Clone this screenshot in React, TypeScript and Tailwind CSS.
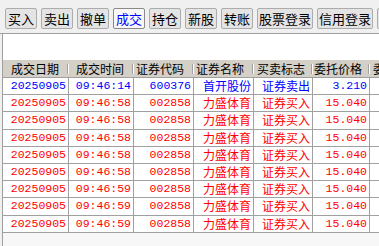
import React from 'react'

const buttons = [
  { label: '买入', w: 'w-[32px]' },
  { label: '卖出', w: 'w-[32px]' },
  { label: '撤单', w: 'w-[32px]' },
  { label: '成交', w: 'w-[32px]', active: true },
  { label: '持仓', w: 'w-[32px]' },
  { label: '新股', w: 'w-[32px]' },
  { label: '转账', w: 'w-[32px]' },
  { label: '股票登录', w: 'w-[56px]' },
  { label: '信用登录', w: 'w-[56px]' },
  { label: '查询', w: 'w-[32px]' },
]

// column widths include the right grid line
const cols = [
  { title: '成交日期', w: 'w-[66px]', pl: 'pl-[8px]' },
  { title: '成交时间', w: 'w-[65px]', pl: 'pl-[7px]' },
  { title: '证券代码', w: 'w-[60px]', pl: 'pl-[2px]' },
  { title: '证券名称', w: 'w-[60px]', pl: 'pl-[2px]' },
  { title: '买卖标志', w: 'w-[59px]', pl: 'pl-[3px]' },
  { title: '委托价格', w: 'w-[57px]', pl: 'pl-[1px]' },
  { title: '委托数量', w: 'w-[60px]', pl: 'pl-[3px]' },
]

type Row = { date: string; time: string; code: string; name: string; side: string; price: string; sell?: boolean }

const rows: Row[] = [
  { date: '20250905', time: '09:46:14', code: '600376', name: '首开股份', side: '证券卖出', price: '3.210', sell: true },
  ...['58', '58', '58', '58', '58', '59', '59', '59'].map((s) => ({
    date: '20250905',
    time: '09:46:' + s,
    code: '002858',
    name: '力盛体育',
    side: '证券买入',
    price: '15.040',
  })),
]

const num = "font-['Liberation_Mono','Noto_Sans_CJK_SC',monospace] text-[11.5px]"
const cjk = "font-['Noto_Sans_CJK_SC',sans-serif] text-[12px]"

export default function App() {
  return (
    <div className="w-[379px] h-[246px] overflow-hidden bg-[#f0f0f0] flex flex-col">
      {/* toolbar */}
      <div className="h-[34px] shrink-0 flex items-start gap-[4px] pl-[5px] pt-[8px] border-b border-[#a0a0a0] overflow-hidden">
        {buttons.map((b) => (
          <div
            key={b.label}
            className={`${b.w} h-[21px] shrink-0 flex items-center justify-center rounded-[2px] border text-[13px] font-['Noto_Sans_CJK_SC',sans-serif] leading-[16px] ${
              b.active
                ? 'bg-[#f8f8f8] border-[#8a8a8a] text-[#0000ff]'
                : 'bg-[#e4e4e4] border-[#acacac] text-black'
            }`}
          >
            {b.label}
          </div>
        ))}
      </div>

      {/* grid panel */}
      <div className="flex-1 ml-[2px] border-l border-[#a0a0a0] bg-[#f7f7f7] flex flex-col overflow-hidden">
        <div className="h-[26px] shrink-0 bg-white" />
        <div className="h-[18px] shrink-0 flex bg-[#d4d0c8] border-b border-[#a0a0a0]">
          {cols.map((c) => (
            <div key={c.title} className={`${c.w} shrink-0 flex items-center`}>
              <span className={`flex-1 ${c.pl} ${cjk} text-black leading-[15px] whitespace-nowrap`}>{c.title}</span>
              <span className="w-[1px] h-[10px] bg-[#a0a0a0] border-r border-white box-content" />
            </div>
          ))}
        </div>
        {rows.map((r, i) => {
          const color = r.sell ? 'text-[#0000ff]' : 'text-[#ff0000]'
          const cells = [
            { v: r.date, f: num },
            { v: r.time, f: num },
            { v: r.code, f: num },
            { v: r.name, f: cjk },
            { v: r.side, f: cjk },
            { v: r.price, f: num },
            { v: '', f: num },
          ]
          return (
            <div key={i} className={`h-[17.2px] shrink-0 flex bg-white border-b border-[#a0a0a0] ${color}`}>
              {cells.map((c, j) => (
                <div
                  key={j}
                  className={`${cols[j].w} shrink-0 flex items-center justify-end pr-[2px] border-r border-[#a0a0a0] ${c.f} leading-[14px] whitespace-nowrap`}
                >
                  {c.v}
                </div>
              ))}
            </div>
          )
        })}
      </div>
    </div>
  )
}
